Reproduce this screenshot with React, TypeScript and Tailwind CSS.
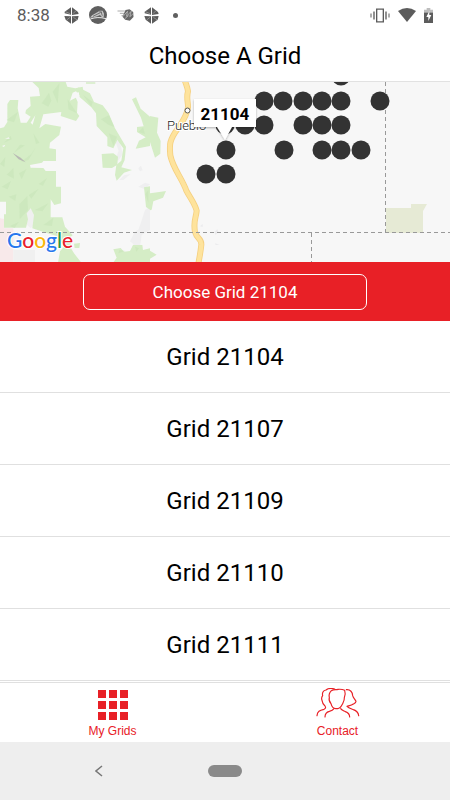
import React from "react";

const grids = [21104, 21107, 21109, 21110, 21111];

const pins: [number, number][] = [
  [341, -6],
  [264, 19], [283, 19], [303, 19], [322, 19], [341, 19], [380, 19],
  [225, 43], [245, 43], [264, 43], [303, 43], [322, 43], [341, 43],
  [226, 68], [284, 68], [322, 68], [341, 68], [361, 68],
  [206, 92], [226, 92],
];

function QuarteredIcon() {
  return (
    <svg viewBox="0 0 45 51" className="h-[17px] w-[15px]" aria-hidden="true">
      <path d="M21 1v22L2 19v-5zM24 1l18 14 2 6-20 3zM1 27l20 1v22L5 38zM24 28l20-1-3 11-17 12z" fill="#5c5c5c" />
      <path d="M4 14l14 6M28 31l12 8M18 31L8 39M27 20l9-9" stroke="#aaa" strokeWidth="2" />
    </svg>
  );
}

function BallIcon() {
  return (
    <svg viewBox="0 0 54 54" className="h-[18px] w-[18px]" aria-hidden="true">
      <circle cx="27" cy="27" r="27" fill="#5f5f5f" />
      <path d="M3 35c8-12 20-14 29-21h9l4 9-1 11h-5l-6-7c-8 4-18 7-30 8z" fill="#c4c4c4" />
      <path d="M12 31l22-11M36 17l4 12M31 17l8 2" stroke="#5f5f5f" strokeWidth="2.5" />
      <path d="M4 39c14-5 31-6 47-1" stroke="#eee" strokeWidth="3" fill="none" />
    </svg>
  );
}

function CometIcon() {
  return (
    <svg viewBox="0 0 50 36" className="h-[12px] w-[17px]" aria-hidden="true">
      <path d="M1 6h22M8 13h14M13 20h10" stroke="#aaa" strokeWidth="3" />
      <path d="M25 3l12-2 11 8 1 15-11 11-14-3-8-9z" fill="#666" />
      <path d="M17 23L31 7l-3 15 14-15-4 16 9-8M23 29l11-9" stroke="#ccc" strokeWidth="2" fill="none" />
    </svg>
  );
}

function StatusBar() {
  return (
    <div className="flex h-[30px] items-center justify-between px-[17px] text-[#5c5c5c]">
      <div className="flex items-center">
        <span className="w-[47px] text-[17px] leading-[30px]">8:38</span>
        <div className="flex items-center gap-[10px]">
          <QuarteredIcon />
          <BallIcon />
          <CometIcon />
          <QuarteredIcon />
          <span className="ml-1 size-[5px] rounded-full bg-[#606060]" />
        </div>
      </div>
      <div className="flex items-center gap-[8px]">
        <svg viewBox="0 0 60 44" className="h-[15px] w-[20px]" aria-hidden="true" fill="none" stroke="#5c5c5c" strokeWidth="4">
          <path d="M20 3h20v38H20zM12 10v24M48 10v24" />
          <path d="M3 16v12M57 16v12" strokeWidth="3" />
        </svg>
        <svg viewBox="0 0 54 42" className="h-[14px] w-[18px]" aria-hidden="true">
          <path d="M0 9Q27-9 54 9L27 42z" fill="#5c5c5c" />
        </svg>
        <svg viewBox="0 0 27 45" className="h-[15px] w-[9px]" aria-hidden="true">
          <path d="M0 15V5h8V0h11v5h8v10z" fill="#bdbdbd" />
          <path d="M0 14h27v31H0z" fill="#5c5c5c" />
          <path d="M16 9L7 27h6v12l9-18h-6z" fill="#fff" />
        </svg>
      </div>
    </div>
  );
}

function GridMap() {
  return (
    <div className="relative h-[180px] overflow-hidden bg-[#f7f7f7]">
      <svg
        viewBox="0 0 450 180"
        preserveAspectRatio="xMidYMid slice"
        className="block h-full w-full font-[Roboto,sans-serif]"
        role="img"
        aria-label="Map of grids near Pueblo"
      >
        <defs>
          <filter id="shade" x="-10%" y="-20%" width="120%" height="150%">
            <feDropShadow dx="0" dy="1" stdDeviation="1" floodOpacity="0.3" />
          </filter>
        </defs>
        <g transform="scale(.333333) translate(0 -6)">
          <path d="M0 415l12 2v28h28v105H0z" fill="#f8e9ea" />
          <path d="M40 510h65v40H40zM78 400l12-15 13 12 2 30-12 18-14-12z" fill="#f0f0f0" />
          <path d="M435 390l15-10v70l-25 15-5 35-15 12-5-20-10-8 14-28 12-8zM415 265l8-8 5 14-8 3zM415 320l20-12 15 5-18 14zM345 180l15 5 8 38-14 20-6-10 8-20zM358 300l14-14 20-4-22 18z" fill="#efeff0" />
          <g fill="#d5edc6">
            <path d="M97 6L197 6 202 20 226 25 248 20 250 34 222 40 233 66 231 98 238 108 228 123 182 108 184 96 130 103 118 145 136 132 183 140 178 165 150 188 148 205 168 208 168 243 130 243 126 248 90 255 92 263 130 264 137 273 168 273 168 320 183 320 183 370 163 375 152 358 152 412 187 412 195 440 218 466 200 480 213 490 213 505 222 520 244 548 174 548 180 514 194 498 170 468 130 456 97 445 102 405 92 385 80 400 84 418 78 443 12 443 12 403 18 403 18 365 0 365 0 145 12 142 22 126 22 72 30 60 55 60 53 85 62 128 80 128 92 110 76 100 78 90 92 78 90 50 120 48 116 24z" />
            <path d="M235 22L270 40 282 66 308 76 326 100 345 145 378 200 374 240 364 262 396 270 372 278 350 302 345 285 349 255 364 242 370 205 352 180 340 205 322 198 322 172 290 138 288 100 274 82 238 50z" />
            <path d="M305 222l35-2 14 10-2 24-16 10-28-1zM396 58l12-6 14 34 28 24v88l-43 8 10-24 20-10-26-16v-15l20-2-8-26zM432 322l18-3v70l-12-8zM340 508l22-4 10 11 18-2 9-18h28l2 15 21-5v45H338l12-17zM258 7h28v4h-28zM222 491l18-2-2 15h-14z" />
          </g>
          <g fill="#c8e5b9" opacity=".6">
            <path d="M125 70l22-32 7 24-9 18zM178 10l-20 25 15 35zM203 58l28 42-26-12zM20 120l34-25-12 32zM12 188l20-20 3 10zM100 160l18 28-10 4zM42 218l18-24 15 2zM62 247l32-25 12-18-20 35zM0 252l16-21-3 30zM20 284l20-20 2 32zM5 320l28-17-10 25zM57 280l22-12-14 30zM58 373l24-25 2 42-25 28zM26 350l23-7-3 20zM86 345l30-19-22 30zM116 312l25-18-12 23zM105 390l40-20-18 24zM130 435l30-22-4 25zM30 438l26-12-12 18zM250 46l28 20-4 14zM303 118l24-12 16 35-18-7zM326 160l25 10-11 28zM415 156l14-14 6 20zM358 510l18 3-21 7zM405 500l12 5-8 10zM436 342l9-12v38z" />
          </g>
          <path d="M38 219l24 14 15 14-21-9z" fill="#b8b9b4" />
          <path d="M15 176l12-4 2 4zM6 198l10-4-4 7zM210 62l8-24 10-4 12 15-8 2zM92 128l14-22-8 28z" fill="#f7f7f7" />
        </g>
        <g transform="scale(.333333) translate(450 -21)">
          <path d="M0 123l25 5-4 45 11 25-1 38-16 12-15-47zM0 355l12-2 36-5-9 20-29 11-5 25-5 2zM0 527l20 12-20 12z" fill="#d5edc6" />
          <path d="M150 454l8-7v9zM193 471l9-8 3 7-8 10zM195 505l14 4-12 1z" fill="#ebebed" />
          <path d="M104 15c5 16 8 20 10 34-6 20 1 34 0 48-4 28-18 44-31 64-28 38-24 52-22 80 8 40 36 70 48 106 14 26 25 38 31 60-2 24-11 30-5 64 6 22 20 19 19 38-3 28-5 34-9 58" fill="none" stroke="#f5d080" strokeWidth="18" strokeLinejoin="round" />
          <path d="M104 15c5 16 8 20 10 34-6 20 1 34 0 48-4 28-18 44-31 64-28 38-24 52-22 80 8 40 36 70 48 106 14 26 25 38 31 60-2 24-11 30-5 64 6 22 20 19 19 38-3 28-5 34-9 58" fill="none" stroke="#fee39c" strokeWidth="13" strokeLinejoin="round" />
        </g>
        <path d="M386 126h25v-4h16l-4 7v22h-37z" fill="#e6ead5" />
        <path d="M0 150.5h450M385.5 0v151M311.5 151v29" fill="none" stroke="#999" strokeDasharray="4 3" />
        <circle cx="187.5" cy="28.5" r="2.5" fill="#fff" stroke="#555" />
        <text x="167" y="48" fontSize="13" fontWeight="300" fill="#222" stroke="#fff" strokeWidth="2" paintOrder="stroke">Pueblo</text>
        {pins.map(([x, y]) => (
          <circle key={`${x}-${y}`} cx={x} cy={y} r="9.5" fill="#333" />
        ))}
        <path d="M194 17h62v28h-24l-7 13-8-13h-23z" fill="#fff" filter="url(#shade)" />
        <text x="225" y="38" fontSize="17" fontWeight="700" fill="#000" textAnchor="middle">21104</text>
        <text x="7" y="166" fontSize="21" fontWeight="500" stroke="#fff" strokeWidth="2" paintOrder="stroke" className="font-[Lato,sans-serif]">
          <tspan fill="#2878ed">G</tspan>
          <tspan fill="#e8202c">o</tspan>
          <tspan fill="#fbb70b">o</tspan>
          <tspan fill="#2878ed">g</tspan>
          <tspan fill="#26984d">l</tspan>
          <tspan fill="#e8202c">e</tspan>
        </text>
      </svg>
    </div>
  );
}

function GridsIcon() {
  return (
    <span className="grid grid-cols-3 gap-[3px]" aria-hidden="true">
      {Array.from({ length: 9 }, (_, i) => (
        <span key={i} className="size-[8px] bg-[#e82026]" />
      ))}
    </span>
  );
}

function ContactIcon() {
  return (
    <svg viewBox="0 0 132 90" className="h-[30px] w-[44px]" aria-hidden="true" fill="none" stroke="#e82026" strokeWidth="3.5" strokeLinecap="round" strokeLinejoin="round">
      <path d="M46 8c8-5 14-2 20-4 8-1 14 0 20 3 3 8 1 16-1 22 1 8-3 14-6 20-4 8-9 13-14 13h-6c-6 0-12-7-14-15-5-6-7-12-5-18-2-8 0-15 6-21z" />
      <path d="M56 3C46 0 35 2 30 6c-9 1-12 9-10 17-4 5-4 9-2 14 1 7 4 13 9 17 3 4 2 8-3 10C11 67 4 70 3 83M27 87c0-11 5-15 13-17 7-2 11-4 14-8M74 62c3 5 8 6 14 9 8 3 13 6 13 16M91 5c13-1 18 8 19 18 2 7 7 11 10 17 0 5-4 6-8 8-5 4-12 5-19 7 4 5 11 7 19 10 9 3 15 8 16 18" />
    </svg>
  );
}

export default function App() {
  return (
    <div className="flex min-h-screen flex-col bg-white font-[Roboto,sans-serif] text-black">
      <StatusBar />
      <header className="flex h-[52px] items-center justify-center border-b border-[#e2e2e2]">
        <h1 className="text-[24px] leading-8">Choose A Grid</h1>
      </header>
      <main className="flex-1">
        <GridMap />
        <div className="flex h-[59px] items-center justify-center bg-[#e82026]">
          <button type="button" className="h-9 w-[63%] rounded-[7px] border border-white text-[17px] leading-6 text-white">
            Choose Grid 21104
          </button>
        </div>
        <ul>
          {grids.map((grid) => (
            <li key={grid} className="border-b border-[#e0e0e0]">
              <button type="button" className="h-[71px] w-full text-[24px] leading-8">
                Grid {grid}
              </button>
            </li>
          ))}
        </ul>
      </main>
      <nav className="grid h-[60px] grid-cols-2 border-t border-[#e0e0e0] font-['Liberation_Sans',sans-serif] text-[12px] leading-4 text-[#e82026]">
        <a href="#grids" className="flex flex-col items-center justify-between pt-[7px] pb-[3px]">
          <GridsIcon />
          My Grids
        </a>
        <a href="#contact" className="flex flex-col items-center justify-between pt-[5px] pb-[3px]">
          <ContactIcon />
          Contact
        </a>
      </nav>
      <footer className="grid h-[58px] grid-cols-[44%_12%_44%] items-center bg-[#eee]">
        <button type="button" aria-label="Back" className="mx-auto">
          <svg viewBox="0 0 8 12" className="h-3 w-2" fill="none" stroke="#777" strokeWidth="1.5">
            <path d="M7 1L1 6l6 5" />
          </svg>
        </button>
        <button type="button" aria-label="Home" className="mx-auto h-[12px] w-[34px] rounded-full bg-[#8a8a8a]" />
      </footer>
    </div>
  );
}
